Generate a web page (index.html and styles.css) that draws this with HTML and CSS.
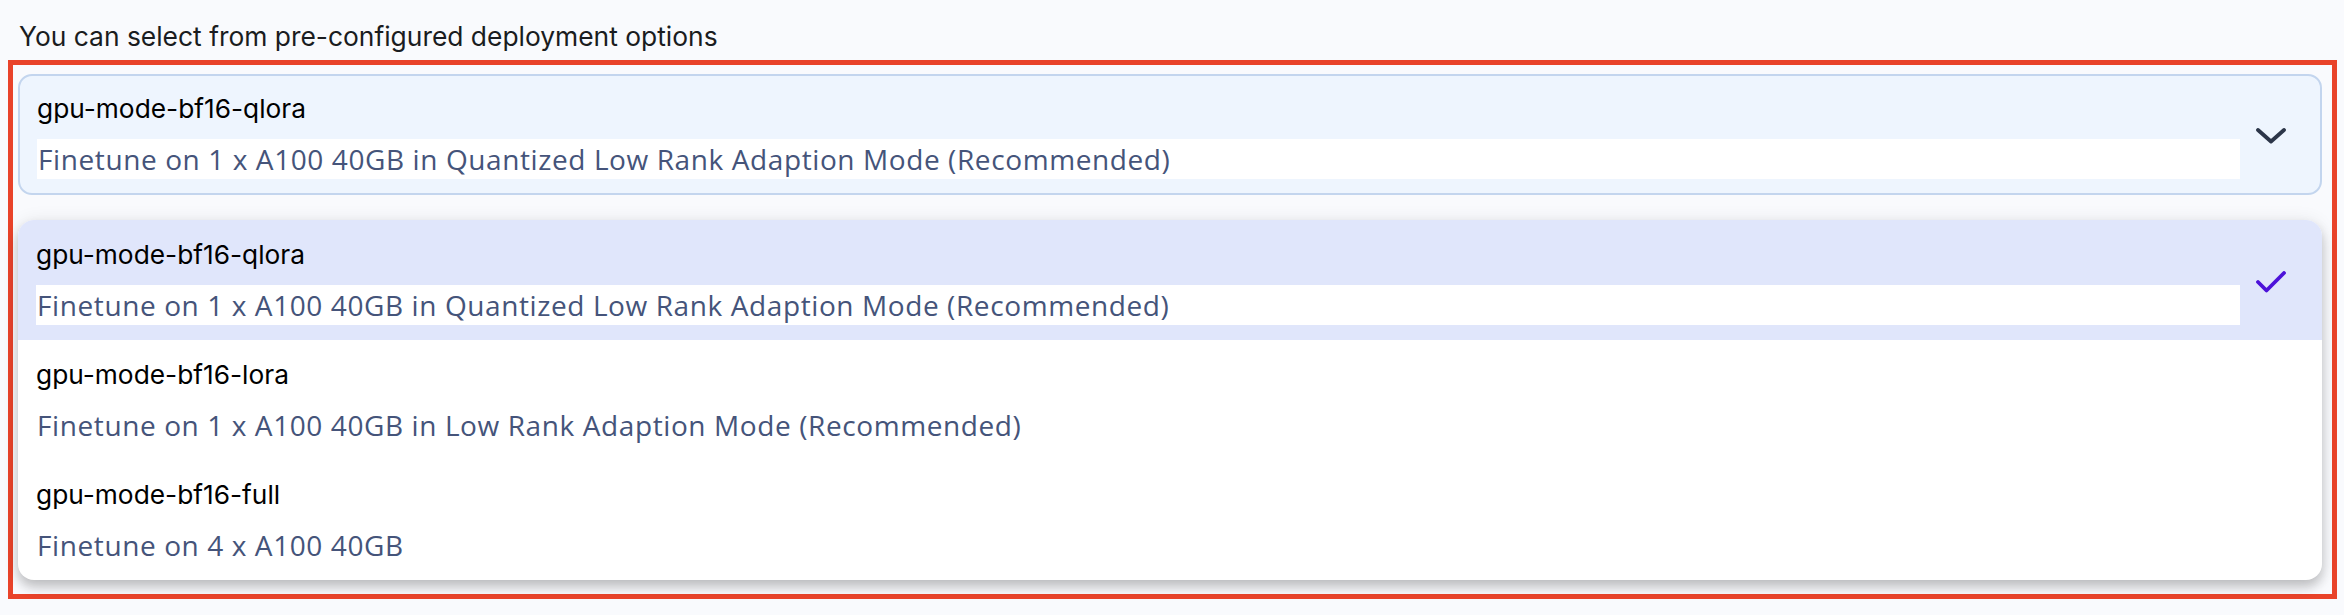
FILE: index.html
```html
<!DOCTYPE html>
<html lang="en">
<head>
<meta charset="utf-8">
<title>Deployment options</title>
<link rel="stylesheet" href="styles.css">
</head>
<body>
  <p class="heading">You can select from pre-configured deployment options</p>
  <div class="frame">
    <div class="select">
      <div class="opt-text">
        <div class="opt-title">gpu-mode-bf16-qlora</div>
        <div class="opt-desc">Finetune on 1 x A100 40GB in Quantized Low Rank Adaption Mode (Recommended)</div>
      </div>
      <svg class="icon chevron" width="30" height="16" viewBox="0 0 30 16"><polyline points="2,2 15,13.5 28,2" fill="none" stroke="#2c3649" stroke-width="3.8" stroke-linecap="round" stroke-linejoin="round"/></svg>
    </div>
    <div class="menu">
      <div class="option selected">
        <div class="opt-text">
          <div class="opt-title">gpu-mode-bf16-qlora</div>
          <div class="opt-desc">Finetune on 1 x A100 40GB in Quantized Low Rank Adaption Mode (Recommended)</div>
        </div>
        <svg class="icon check" width="30" height="22" viewBox="0 0 30 22"><polyline points="2,11 10.5,19.5 28,2" fill="none" stroke="#4c12d9" stroke-width="3.8" stroke-linecap="round" stroke-linejoin="round"/></svg>
      </div>
      <div class="option">
        <div class="opt-text">
          <div class="opt-title">gpu-mode-bf16-lora</div>
          <div class="opt-desc">Finetune on 1 x A100 40GB in Low Rank Adaption Mode (Recommended)</div>
        </div>
        <span class="icon"></span>
      </div>
      <div class="option">
        <div class="opt-text">
          <div class="opt-title">gpu-mode-bf16-full</div>
          <div class="opt-desc">Finetune on 4 x A100 40GB</div>
        </div>
        <span class="icon"></span>
      </div>
    </div>
  </div>
</body>
</html>
```
FILE: styles.css
```css
html, body {
  margin: 0;
  padding: 0;
  background: #f9fafd;
}
body {
  font-family: Inter, "Liberation Sans", sans-serif;
  color: #1c1d21;
}
.heading {
  margin: 0 0 4px 0;
  padding: 16px 19px 0;
  font-size: 26.4px;
  line-height: 40px;
  font-weight: 400;
  color: #1a1c20;
}
.frame {
  margin: 0 7px 0 8px;
  border: 5px solid #e9432a;
  padding: 9px 10px 14px 5px;
  display: flex;
  flex-direction: column;
  gap: 25px;
}
.select {
  display: flex;
  align-items: center;
  gap: 16px;
  background: #eef5fe;
  border: 2px solid #c3d5ee;
  border-radius: 14px;
  padding: 17px 34px 14px 17px;
}
.menu {
  background: #ffffff;
  border-radius: 16px;
  overflow: hidden;
  box-shadow: 0 7px 12px rgba(0, 0, 0, 0.22), 0 0 18px rgba(0, 0, 0, 0.07);
}
.option {
  display: flex;
  align-items: center;
  gap: 16px;
  height: 120px;
  box-sizing: border-box;
  padding: 19px 36px 15px 18px;
}
.option.selected {
  background: #e0e6fb;
}
.opt-text {
  flex: 1;
  display: flex;
  flex-direction: column;
  gap: 14px;
}
.opt-title {
  font-size: 26.3px;
  line-height: 32px;
  font-weight: 400;
  color: #000000;
}
.opt-desc {
  font-family: "Open Sans", "Noto Sans", sans-serif;
  font-size: 28px;
  letter-spacing: 0.6px;
  line-height: 40px;
  height: 40px;
  color: #45547a;
  background: #ffffff;
  padding-left: 1px;
}
.icon {
  width: 30px;
  flex: none;
  display: block;
}
```
